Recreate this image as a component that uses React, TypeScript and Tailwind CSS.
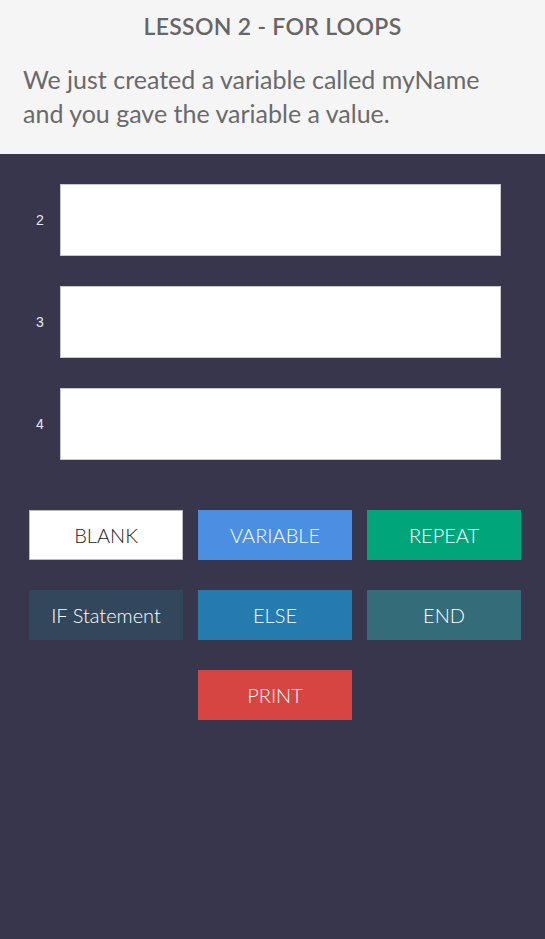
import React from "react";

const font = { fontFamily: "Lato, 'Noto Sans', sans-serif" };

function Btn({ label, cls }: { label: string; cls: string }) {
  return (
    <div className={`w-[154px] h-[50px] flex items-center justify-center text-[20px] font-light ${cls}`}>
      {label}
    </div>
  );
}

export default function App() {
  return (
    <div className="w-[545px] h-[939px] flex flex-col bg-[#37364d]" style={font}>
      <div className="bg-[#f5f5f5] h-[154px] flex flex-col">
        <div className="pt-[11px] text-center text-[23px] font-semibold text-[#666666] tracking-[0.3px] leading-[30px]">
          LESSON 2 - FOR LOOPS
        </div>
        <div className="pl-[23px] pt-[21px] text-[25px] leading-[34px] text-[#6a6a6a]">
          We just created a variable called myName
          <br />
          and you gave the variable a value.
        </div>
      </div>
      <div className="flex flex-col gap-[30px] pt-[30px]">
        {[2, 3, 4].map((n) => (
          <div key={n} className="flex items-center">
            <div
              className="w-[60px] pl-[20px] text-center text-[14px] text-[#e8e8ee]"
              style={{ fontFamily: "'Liberation Sans', sans-serif" }}
            >
              {n}
            </div>
            <div className="w-[441px] h-[72px] bg-white border border-[#c8c8d0]" />
          </div>
        ))}
      </div>
      <div className="flex flex-col gap-[30px] pt-[50px] pl-[29px]">
        <div className="flex gap-[15px]">
          <Btn label="BLANK" cls="bg-white text-[#222] border border-[#bbb]" />
          <Btn label="VARIABLE" cls="bg-[#4a8fe2] text-white" />
          <Btn label="REPEAT" cls="bg-[#00a67a] text-white" />
        </div>
        <div className="flex gap-[15px]">
          <Btn label="IF Statement" cls="bg-[#33475c] text-white" />
          <Btn label="ELSE" cls="bg-[#267bae] text-white" />
          <Btn label="END" cls="bg-[#346c79] text-white" />
        </div>
        <div className="flex pl-[169px]">
          <Btn label="PRINT" cls="bg-[#d64541] text-white" />
        </div>
      </div>
    </div>
  );
}
